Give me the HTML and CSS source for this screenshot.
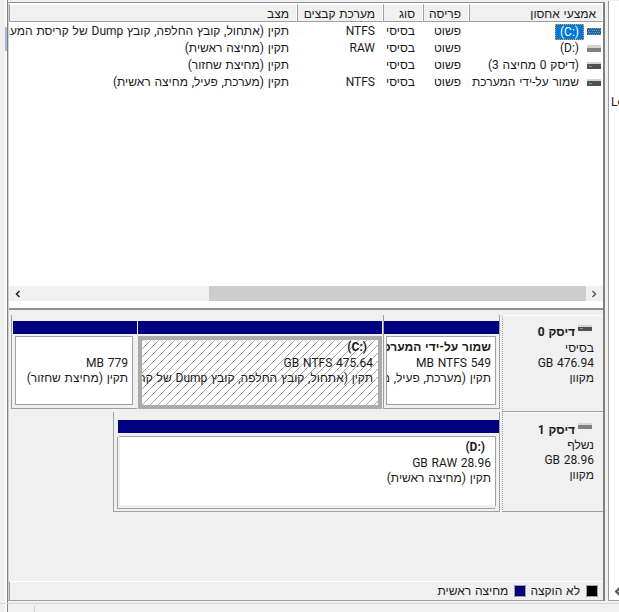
FILE: index.html

```html
<!DOCTYPE html>
<html lang="he" dir="rtl">
<head>
  <meta charset="UTF-8" />
  <title>ניהול דיסקים</title>
  <link rel="stylesheet" href="styles.css">
</head>
<body>
  <div class="window">
    <div class="panes">
      <div class="side-right">
        <span class="clip-text">Le</span>
        <svg class="side-arrow" width="8" height="9" viewBox="0 0 8 9"><path d="M5 0L.5 4.5 5 9h3V6.5H6L4 4.5l2-2h2V0z" fill="#606060"/></svg>
      </div>

      <div class="main">
        <div class="list-pane">
          <div class="list-head">
            <div class="col col-vol">אמצעי אחסון</div>
            <div class="col col-layout">פריסה</div>
            <div class="col col-type">סוג</div>
            <div class="col col-fs">מערכת קבצים</div>
            <div class="col col-status">מצב</div>
          </div>
          <div class="list-body">
            <div class="list-row">
              <div class="cell col-vol">
                <svg class="vol-icon" width="14" height="9" viewBox="0 0 14 9"><rect y="1" width="14" height="7" fill="#2f5f8f"/><path d="M0 1.5h14M1 3.5h13M0 5.5h14M1 7.5h13" stroke="#52a8f0" stroke-dasharray="1 1"/></svg>
                <span class="selected" dir="ltr">(C:)</span>
              </div>
              <div class="cell col-layout">פשוט</div>
              <div class="cell col-type">בסיסי</div>
              <div class="cell col-fs">NTFS</div>
              <div class="cell col-status">תקין (אתחול, קובץ החלפה, קובץ Dump של קריסת המערכת, מחיצה ראשית)</div>
            </div>
            <div class="list-row">
              <div class="cell col-vol">
                <svg class="vol-icon" width="14" height="9" viewBox="0 0 14 9"><rect y="1" width="14" height="3" fill="#d4d4d4"/><rect y="4" width="14" height="4" fill="#808080"/></svg>
                <span dir="ltr">(D:)</span>
              </div>
              <div class="cell col-layout">פשוט</div>
              <div class="cell col-type">בסיסי</div>
              <div class="cell col-fs">RAW</div>
              <div class="cell col-status">תקין (מחיצה ראשית)</div>
            </div>
            <div class="list-row">
              <div class="cell col-vol">
                <svg class="vol-icon" width="14" height="9" viewBox="0 0 14 9"><rect y="1" width="14" height="2" fill="#d4d4d4"/><rect y="3" width="14" height="5" fill="#505050"/><rect x="2" y="5" width="3" height="1" fill="#3fd03f"/></svg>
                <span>(דיסק 0 מחיצה 3)</span>
              </div>
              <div class="cell col-layout">פשוט</div>
              <div class="cell col-type">בסיסי</div>
              <div class="cell col-fs"></div>
              <div class="cell col-status">תקין (מחיצת שחזור)</div>
            </div>
            <div class="list-row">
              <div class="cell col-vol">
                <svg class="vol-icon" width="14" height="9" viewBox="0 0 14 9"><rect y="1" width="14" height="2" fill="#d4d4d4"/><rect y="3" width="14" height="5" fill="#505050"/><rect x="2" y="5" width="3" height="1" fill="#3fd03f"/></svg>
                <span>שמור על-ידי המערכת</span>
              </div>
              <div class="cell col-layout">פשוט</div>
              <div class="cell col-type">בסיסי</div>
              <div class="cell col-fs">NTFS</div>
              <div class="cell col-status">תקין (מערכת, פעיל, מחיצה ראשית)</div>
            </div>
          </div>
          <div class="hscroll">
            <svg class="arrow" width="7" height="8" viewBox="0 0 7 8"><path d="M1.5 1l3 3-3 3" fill="none" stroke="#606060" stroke-width="1.5"/></svg>
            <div class="track"><div class="thumb"></div></div>
            <svg class="arrow" width="7" height="8" viewBox="0 0 7 8"><path d="M5.5 1l-3 3 3 3" fill="none" stroke="#202020" stroke-width="1.5"/></svg>
          </div>
        </div>

        <div class="graph-pane">
          <div class="disk-row disk-row-0">
            <div class="disk-label">
              <div class="disk-name">
                <svg width="14" height="7" viewBox="0 0 14 7"><rect width="14" height="2" fill="#d4d4d4"/><rect y="2" width="14" height="4" fill="#505050"/><rect x="2" y="3" width="3" height="1" fill="#3fd03f"/></svg>
                <b>דיסק 0</b>
              </div>
              <div>בסיסי</div>
              <div>476.94 GB</div>
              <div>מקוון</div>
            </div>
            <div class="parts">
              <div class="part part-sys">
                <div class="part-bar"></div>
                <div class="part-box">
                  <div class="part-inner">
                    <b class="part-title">שמור על-ידי המערכת</b>
                    <div class="part-line">549 MB NTFS</div>
                    <div class="part-line">תקין (מערכת, פעיל, מחיצה ראשית)</div>
                  </div>
                </div>
              </div>
              <div class="part part-c">
                <div class="part-bar"></div>
                <div class="part-box">
                  <div class="part-inner part-hatched">
                    <b class="part-title title-short"><bdi dir="ltr">(C:)</bdi></b>
                    <div class="part-line">475.64 GB NTFS</div>
                    <div class="part-line">תקין (אתחול, קובץ החלפה, קובץ Dump של קריסת המערכת, מחיצה ראשית)</div>
                  </div>
                </div>
              </div>
              <div class="part part-rec">
                <div class="part-bar"></div>
                <div class="part-box">
                  <div class="part-inner">
                    <div class="part-line part-first">779 MB</div>
                    <div class="part-line">תקין (מחיצת שחזור)</div>
                  </div>
                </div>
              </div>
            </div>
          </div>

          <div class="disk-row disk-row-1">
            <div class="disk-label">
              <div class="disk-name">
                <svg width="14" height="7" viewBox="0 0 14 7"><rect width="14" height="2" fill="#d8d8d8"/><rect y="2" width="14" height="4" fill="#808080"/></svg>
                <b>דיסק 1</b>
              </div>
              <div>נשלף</div>
              <div>28.96 GB</div>
              <div>מקוון</div>
            </div>
            <div class="parts">
              <div class="part part-d">
                <div class="part-bar"></div>
                <div class="part-box">
                  <div class="part-inner">
                    <b class="part-title title-short"><bdi dir="ltr">(D:)</bdi></b>
                    <div class="part-line">28.96 GB RAW</div>
                    <div class="part-line">תקין (מחיצה ראשית)</div>
                  </div>
                </div>
              </div>
            </div>
          </div>

          <div class="graph-spacer"></div>

          <div class="legend">
            <span class="swatch swatch-black"></span>
            <span>לא הוקצה</span>
            <span class="swatch swatch-blue"></span>
            <span>מחיצה ראשית</span>
          </div>
        </div>
      </div>

      <div class="side-left">
        <div class="tree-strip"><div class="tree-selected"></div></div>
      </div>
    </div>
    <div class="statusbar"><div class="status-cell"></div></div>
  </div>
</body>
</html>
```

FILE: styles.css

```css
html, body {
  margin: 0;
  height: 100%;
}
body {
  font-family: Roboto, "Liberation Sans", Arial, sans-serif;
  font-size: 12px;
  word-spacing: 0.8px;
  color: #1a1a1a;
  background-color: #f0f0f0;
  overflow: hidden;
}
.window {
  display: flex;
  flex-direction: column;
  height: 612px;
  width: 619px;
}
.panes {
  display: flex;
  height: 602px;
  flex: none;
}
.statusbar {
  flex: 1;
  display: flex;
  margin-top: 1px;
  border-top: 1px solid #d9d9d9;
}
.status-cell {
  width: 34px;
  margin-right: auto;
  margin-top: 2px;
  border-right: 1px solid #d0d0d0;
}

.side-right {
  width: 11px;
  height: 600px;
  margin-left: 3px;
  margin-top: 1px;
  padding-top: 94px;
  box-sizing: border-box;
  background-color: #fff;
  border-left: 1px solid #8f9aa5;
  border-bottom: 1px solid #a0a0a0;
  overflow: hidden;
  direction: ltr;
  flex: none;
  display: flex;
  flex-direction: column;
  align-items: flex-start;
}
.clip-text {
  padding-left: 2px;
  white-space: nowrap;
}
.side-arrow {
  margin-top: auto;
  margin-bottom: 4px;
  margin-left: 5px;
  flex: none;
}
.main {
  width: 597px;
  height: 599px;
  margin-top: 2px;
  flex: none;
  border-top: 1px solid #8f8f8f;
  border-right: 2px solid #808080;
  border-bottom: 1px solid #a0a0a0;
  border-left: 1px solid #d0d0d0;
  box-sizing: border-box;
  display: flex;
  flex-direction: column;
}
.side-left {
  width: 8px;
  flex: none;
}
.tree-strip {
  width: 2px;
  height: 599px;
  background-color: #fff;
  border-right: 1px solid #808080;
  padding-top: 27px;
  box-sizing: content-box;
}
.tree-selected {
  height: 24px;
  background-color: #9fbad6;
}

/* volume list */
.list-pane {
  height: 307px;
  background-color: #fff;
  border-bottom: 2px solid #8f8f8f;
  box-sizing: border-box;
  display: flex;
  flex-direction: column;
  flex: none;
}
.list-head {
  display: flex;
  height: 18px;
  margin-top: 1px;
  background-color: #f0f0f0;
  flex: none;
}
.col {
  border: 1px solid #a0a0a0;
  border-top-color: #fff;
  border-right-color: #fff;
  padding: 2px 7px 0 0;
  box-sizing: border-box;
}
.col.col-vol { padding-right: 6px; }
.col-vol { width: 134px; }
.col-layout { width: 46px; }
.col-type { width: 40px; }
.col-fs { width: 86px; }
.col-status { flex: 1; min-width: 0; }
.list-body {
  flex: 1;
  padding-top: 1px;
}
.list-row {
  display: flex;
  height: 17px;
  line-height: 17px;
}
.cell {
  padding-right: 8px;
  box-sizing: border-box;
  white-space: nowrap;
  overflow: hidden;
}
.cell.col-vol {
  padding-right: 2px;
  display: flex;
  align-items: center;
  gap: 8px;
}
.vol-icon {
  flex: none;
}
.selected {
  background-color: #0078d7;
  color: #fff;
  outline: 1px dotted #f0a030;
  outline-offset: -1px;
  padding: 0 5px;
  margin-right: -5px;
  height: 16px;
  line-height: 16px;
}
.hscroll {
  display: flex;
  align-items: center;
  height: 15px;
  background-color: #f0f0f0;
  margin-bottom: 7px;
  flex: none;
}
.hscroll .arrow {
  width: 17px;
  flex: none;
}
.track {
  flex: 1;
  height: 15px;
}
.thumb {
  width: 377px;
  height: 100%;
  background-color: #cdcdcd;
}

/* graphical view */
.graph-pane {
  flex: 1;
  display: flex;
  flex-direction: column;
  padding-top: 5px;
  background-color: #f0f0f0;
  min-height: 0;
}
.disk-row {
  display: flex;
  flex: none;
}
.disk-row-0 { height: 97px; }
.disk-row-1 { height: 100px; }
.disk-label {
  width: 101px;
  flex: none;
  box-sizing: border-box;
  padding: 9px 9px 0 0;
  line-height: 15px;
  border-top: 1px solid #fff;
  border-bottom: 1px solid #a0a0a0;
  border-left: 1px dotted #a0a0a0;
}
.disk-row-0 .disk-name {
  margin-bottom: 1px;
}
.disk-row-1 .disk-label {
  padding-top: 10px;
}
.disk-name {
  display: flex;
  align-items: center;
  gap: 3px;
}
.disk-name svg {
  margin-top: -8px;
  margin-right: 2px;
}
.parts {
  display: flex;
  flex: 1;
  min-width: 0;
  padding-right: 2px;
}
.part {
  display: flex;
  flex-direction: column;
  flex: none;
  box-sizing: border-box;
  padding-top: 6px;
  height: 94px;
  margin-left: 1px;
  border-left: 1px solid #a0a0a0;
  border-right: 1px solid #a0a0a0;
  border-bottom: 1px solid #a0a0a0;
}
.part-sys { width: 117px; }
.part-c { width: 244px; border: 0; }
.part-rec { width: 126px; padding-left: 1px; border-right: 0; }
.part-d { width: 387px; height: 100px; padding-top: 8px; padding-left: 4px; }
.part-bar {
  height: 13px;
  background-color: #000080;
  flex: none;
}
.part-box {
  flex: 1;
  padding: 2px 3px 3px 2px;
  min-height: 0;
}
.part-rec .part-box {
  padding-right: 4px;
}
.part-c .part-box {
  padding: 2px 0 0 0;
}
.part-d .part-box {
  padding: 3px 3px 3px 0;
}
.part-inner {
  height: 100%;
  box-sizing: border-box;
  background-color: #fff;
  border: 1px solid #a0a0a0;
  padding: 3px 4px 0 4px;
  line-height: 15.5px;
  overflow: hidden;
}
.part-d .part-inner {
  background-clip: padding-box;
  border-left: 2px solid #f0f0f0;
  border-bottom: 3px solid #f0f0f0;
  box-shadow: -1px 1px 0 #a0a0a0;
}
.part-hatched {
  border: 4px solid #ababab;
  padding: 0 5px 0 4px;
  background-image: repeating-linear-gradient(135deg, #a8a8a8 0, #a8a8a8 1px, #fff 1px, #fff 5.66px);
}
.part-title, .part-line {
  display: block;
  white-space: nowrap;
}
.title-short {
  margin-right: 6px;
}
.part-first {
  margin-top: 15.5px;
}
.graph-spacer {
  flex: 1;
}
.legend {
  height: 19px;
  display: flex;
  align-items: center;
  gap: 6px;
  padding-right: 5px;
  box-sizing: border-box;
  border-top: 1px solid #fff;
  border-left: 1px solid #a0a0a0;
  flex: none;
}
.swatch {
  width: 12px;
  height: 12px;
  box-sizing: border-box;
  border: 1px solid #a0a0a0;
  flex: none;
}
.swatch-black { background-color: #000; }
.swatch-blue { background-color: #000080; margin-right: -2px; }
```
